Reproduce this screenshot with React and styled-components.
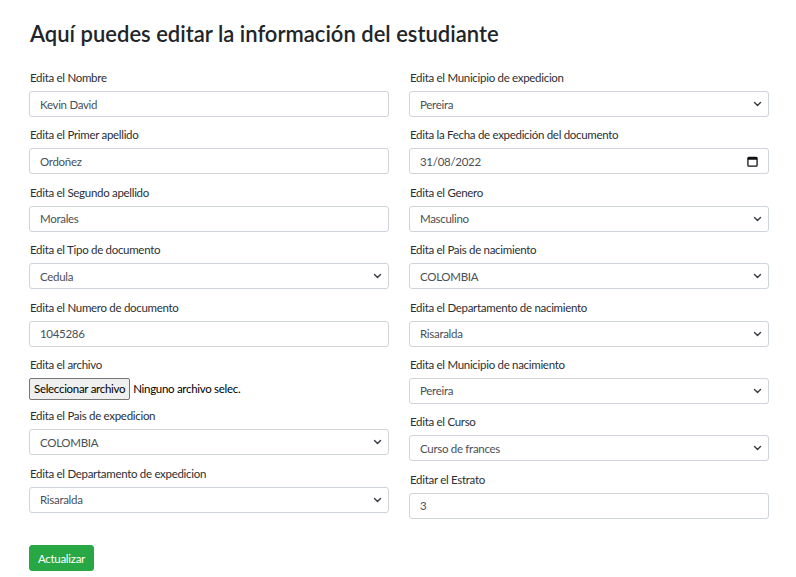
import React from 'react'
import styled, { createGlobalStyle } from 'styled-components'

const GlobalStyle = createGlobalStyle`
    body{
        margin: 0;
        background: #fff;
        font-family: Lato, "Noto Sans", sans-serif;
        color: #212529;
    }
`

const leftFields = [
    { label: 'Edita el Nombre', type: 'text', value: 'Kevin David' },
    { label: 'Edita el Primer apellido', type: 'text', value: 'Ordoñez' },
    { label: 'Edita el Segundo apellido', type: 'text', value: 'Morales' },
    { label: 'Edita el Tipo de documento', type: 'select', value: 'Cedula' },
    { label: 'Edita el Numero de documento', type: 'text', value: '1045286' },
    { label: 'Edita el archivo', type: 'file' },
    { label: 'Edita el Pais de expedicion', type: 'select', value: 'COLOMBIA' },
    { label: 'Edita el Departamento de expedicion', type: 'select', value: 'Risaralda' },
]

const rightFields = [
    { label: 'Edita el Municipio de expedicion', type: 'select', value: 'Pereira' },
    { label: 'Edita la Fecha de expedición del documento', type: 'date', value: '31/08/2022' },
    { label: 'Edita el Genero', type: 'select', value: 'Masculino' },
    { label: 'Edita el Pais de nacimiento', type: 'select', value: 'COLOMBIA' },
    { label: 'Edita el Departamento de nacimiento', type: 'select', value: 'Risaralda' },
    { label: 'Edita el Municipio de nacimiento', type: 'select', value: 'Pereira' },
    { label: 'Edita el Curso', type: 'select', value: 'Curso de frances' },
    { label: 'Editar el Estrato', type: 'text', value: '3' },
]

const Chevron = () => (
    <svg width="11" height="8" viewBox="0 0 16 16">
        <path d="M2 5l6 6 6-6" fill="none" stroke="#343a40" strokeWidth="2.8" strokeLinecap="round" strokeLinejoin="round" />
    </svg>
)

const CalendarIcon = () => (
    <svg width="11" height="11" viewBox="0 0 12 12">
        <rect x="1" y="1.5" width="10" height="9.5" rx="1" fill="none" stroke="#111" strokeWidth="1.4" />
        <rect x="1" y="1.5" width="10" height="2.6" fill="#111" />
    </svg>
)

const Field = ({ field }) => {
    const { label, type, value } = field
    return (
        <Group>
            <Label>{label}</Label>
            { type === 'text' && <Input type="text" defaultValue={value} /> }
            { type === 'select' && (
                <SelectWrap>
                    <Select defaultValue={value}>
                        <option>{value}</option>
                    </Select>
                    <Arrow><Chevron /></Arrow>
                </SelectWrap>
            )}
            { type === 'date' && (
                <DateBox>
                    <span>{value}</span>
                    <CalendarIcon />
                </DateBox>
            )}
            { type === 'file' && (
                <FileRow>
                    <FileBtn type="button">Seleccionar archivo</FileBtn>
                    <FileText>Ninguno archivo selec.</FileText>
                </FileRow>
            )}
        </Group>
    )
}

const App = () => {
    return (
        <Page>
            <GlobalStyle />
            <Title>Aquí puedes editar la información del estudiante</Title>
            <Columns>
                <Column>
                    { leftFields.map(f => <Field key={f.label} field={f} />) }
                </Column>
                <Column>
                    { rightFields.map(f => <Field key={f.label} field={f} />) }
                </Column>
            </Columns>
            <SubmitBtn type="button">Actualizar</SubmitBtn>
        </Page>
    )
}

const Page = styled.div`
    padding: 19px 27px 20px 29px;
    width: 740px;
`

const Title = styled.h3`
    margin: 0 0 20px 1px;
    font-size: 22px;
    font-weight: 600;
    line-height: 30px;
    color: #212529;
`

const Columns = styled.div`
    display: grid;
    grid-template-columns: 360px 360px;
    column-gap: 20px;
    align-items: start;
`

const Column = styled.div`
    display: flex;
    flex-direction: column;
`

const Group = styled.div`
    margin-bottom: 9.4px;
`

const Label = styled.label`
    display: block;
    font-size: 11.5px;
    letter-spacing: -0.3px;
    line-height: 18px;
    margin: 0 0 4px 1px;
    color: #2b2f33;
`

const fieldBox = `
    box-sizing: border-box;
    width: 100%;
    height: 26px;
    border: 1px solid #ced4da;
    border-radius: 3px;
    background: #fff;
    font-family: Lato, "Noto Sans", sans-serif;
    font-size: 11.5px;
    letter-spacing: -0.3px;
    color: #495057;
    padding: 0 10px;
`

const Input = styled.input`
    ${fieldBox}
    display: block;
    outline: none;
`

const SelectWrap = styled.div`
    position: relative;
`

const Select = styled.select`
    ${fieldBox}
    display: block;
    appearance: none;
    -webkit-appearance: none;
    outline: none;
`

const Arrow = styled.span`
    position: absolute;
    right: 6px;
    top: 9px;
    display: flex;
    pointer-events: none;
`

const DateBox = styled.div`
    ${fieldBox}
    display: flex;
    align-items: center;
    justify-content: space-between;
    padding: 0 10px 0 10px;
`

const FileRow = styled.div`
    display: flex;
    align-items: center;
    height: 22px;
    margin-top: 0;
    margin-bottom: -2px;
`

const FileBtn = styled.button`
    height: 22px;
    box-sizing: border-box;
    padding: 0 4px;
    margin: 0 3px 0 0;
    background: #efefef;
    border: 1px solid #767676;
    border-radius: 2px;
    font-family: Lato, "Noto Sans", sans-serif;
    font-size: 11.5px;
    letter-spacing: -0.3px;
    color: #000;
`

const FileText = styled.span`
    font-size: 11.5px;
    letter-spacing: -0.3px;
    color: #000;
`

const SubmitBtn = styled.button`
    display: block;
    margin-top: 17px;
    height: 26px;
    padding: 0 8px;
    background: #28a745;
    border: 1px solid #28a745;
    border-radius: 3px;
    color: #fff;
    font-family: Lato, "Noto Sans", sans-serif;
    font-size: 11.5px;
    letter-spacing: -0.3px;
`

export default App
